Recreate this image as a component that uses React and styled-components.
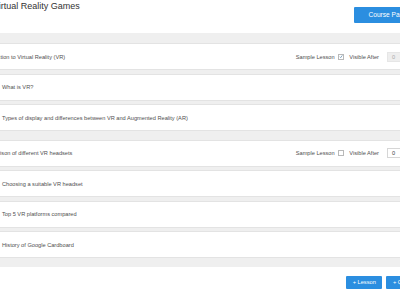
import React from "react";
import styled, { createGlobalStyle } from "styled-components";

const Global = createGlobalStyle`
  html, body { margin: 0; padding: 0; background: #fff; overflow: hidden; }
  body { font-family: "Liberation Sans", Arial, sans-serif; }
`;

const Page = styled.div`
  width: 453px;
  margin-left: -28px;
  display: flex;
  flex-direction: column;
`;

const Header = styled.div`
  height: 33px;
  display: flex;
  justify-content: space-between;
  align-items: flex-start;
  padding: 0 3px 0 21px;
  box-sizing: border-box;
`;

const Title = styled.h1`
  margin: 1px 0 0;
  font-size: 9px;
  font-weight: normal;
  color: #333;
  line-height: 11px;
`;

const BlueButton = styled.button`
  font-family: inherit;
  background: #2b8ee0;
  color: #fff;
  border: none;
  border-radius: 1px;
  height: ${(p) => (p.$big ? "16px" : "13px")};
  margin-top: ${(p) => (p.$big ? "7px" : "0")};
  padding: ${(p) => (p.$big ? "0 15px" : "0 6.5px")};
  font-size: ${(p) => (p.$big ? "6.6px" : "5.7px")};
  line-height: 1;
  cursor: pointer;
`;

const Board = styled.div`
  background: #efefef;
  padding: 10px 0 9px;
  display: flex;
  flex-direction: column;
  gap: 8.5px;
`;

const Section = styled.div`
  display: flex;
  flex-direction: column;
  gap: 3.5px;
`;

const Row = styled.div`
  height: 27px;
  box-sizing: border-box;
  background: #fff;
  border-top: 1px solid #e3e3e3;
  border-bottom: 1px solid #e3e3e3;
  display: flex;
  align-items: center;
  padding: 0 8px 0 ${(p) => (p.$lesson ? "30px" : "8px")};
  font-size: 5.65px;
  color: #505050;
`;

const RowTitle = styled.span`
  flex: 1;
`;

const Controls = styled.div`
  display: flex;
  align-items: center;
  color: #505050;
`;

const Label = styled.span`
  font-size: 5.65px;
`;

const Check = styled.span`
  width: 6px;
  height: 6px;
  box-sizing: border-box;
  border: 1px solid #b9b9b9;
  background: #fff;
  margin: 0 5px 0 3.7px;
  display: inline-flex;
  align-items: center;
  justify-content: center;
  svg { display: block; }
`;

const DaysInput = styled.span`
  width: 30px;
  height: 10px;
  box-sizing: border-box;
  margin-left: 8px;
  border: 1px solid ${(p) => (p.$disabled ? "#e6e6e6" : "#d6d6d6")};
  background: ${(p) => (p.$disabled ? "#eeeeee" : "#fff")};
  color: ${(p) => (p.$disabled ? "#aaa" : "#444")};
  font-size: 5.65px;
  display: flex;
  align-items: center;
  padding-left: 4px;
`;

const Footer = styled.div`
  display: flex;
  justify-content: flex-end;
  gap: 4px;
  padding: 9px 9px 0 0;
`;

const sections = [
  {
    title: "Introduction to Virtual Reality (VR)",
    checked: true,
    lessons: [
      "What is VR?",
      "Types of display and differences between VR and Augmented Reality (AR)",
    ],
  },
  {
    title: "Comparison of different VR headsets",
    checked: false,
    lessons: [
      "Choosing a suitable VR headset",
      "Top 5 VR platforms compared",
      "History of Google Cardboard",
    ],
  },
];

export default function App() {
  return (
    <>
      <Global />
      <Page>
        <Header>
          <Title>Virtual Reality Games</Title>
          <BlueButton $big>Course Page</BlueButton>
        </Header>
        <Board>
          {sections.map((s) => (
            <Section key={s.title}>
              <Row>
                <RowTitle>{s.title}</RowTitle>
                <Controls>
                  <Label>Sample Lesson</Label>
                  <Check>
                    {s.checked && (
                      <svg width="5" height="5" viewBox="0 0 10 10">
                        <path d="M2 5.5 L4.2 7.8 L8.5 2" fill="none" stroke="#3d6f99" strokeWidth="1.5" />
                      </svg>
                    )}
                  </Check>
                  <Label>Visible After</Label>
                  <DaysInput $disabled={s.checked}>0</DaysInput>
                </Controls>
              </Row>
              {s.lessons.map((l) => (
                <Row $lesson key={l}>
                  <RowTitle>{l}</RowTitle>
                </Row>
              ))}
            </Section>
          ))}
        </Board>
        <Footer>
          <BlueButton>+ Lesson</BlueButton>
          <BlueButton>+ Quiz</BlueButton>
        </Footer>
      </Page>
    </>
  );
}
